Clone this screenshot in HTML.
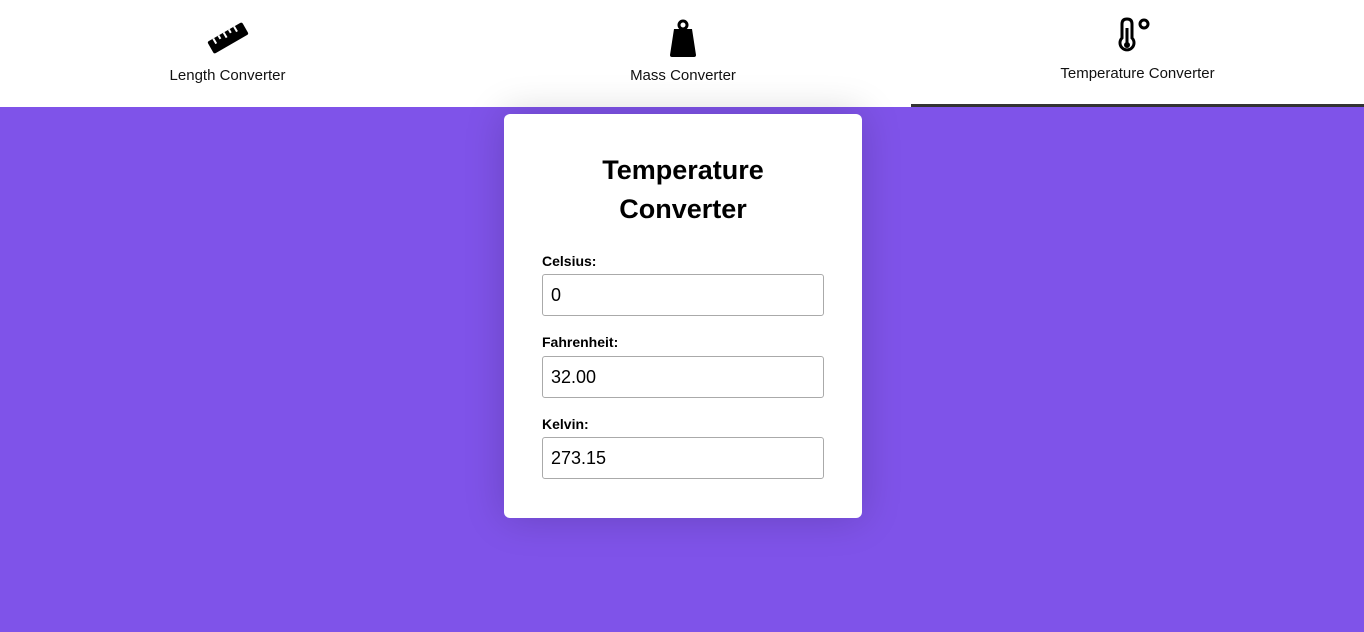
<!DOCTYPE html>
<html><head><style>
body{margin:0;width:1364px;height:632px;background:#7f53e9;font-family:"Liberation Sans",sans-serif;overflow:hidden;position:relative}
.nav{position:absolute;top:0;left:0;width:1364px;height:107px;background:#fff}
.tab{position:absolute;top:0;height:107px;text-align:center;font-size:15px;color:#111}
.tab .lbl{position:absolute;left:0;right:0;top:67px}
.tab.active{border-bottom:3px solid #333;height:104px}
.tab.active .lbl{top:65px}
.tab svg{position:absolute;left:50%;transform:translateX(-50%)}
.card{position:absolute;left:504px;top:114px;width:358px;height:404px;background:#fff;border-radius:6px;box-shadow:0 0 40px rgba(0,0,0,.18)}
h1{margin:0;position:absolute;top:37px;left:0;right:0;text-align:center;font-size:27px;line-height:39px;font-weight:bold;color:#000}
label{position:absolute;left:38px;font-size:14px;font-weight:bold;color:#000}
.in{position:absolute;left:38px;width:282px;height:42px;border:1px solid #aaa;border-radius:3px;box-sizing:border-box;font-size:18px;line-height:40px;padding-left:8px;color:#000}
</style></head><body>
<div class="nav">
<div class="tab" style="left:0;width:455px"><svg style="top:18px" width="50" height="40" viewBox="0 0 50 40"><g transform="rotate(-30 25 20)"><rect x="5" y="13" width="40" height="14" rx="2" fill="#000"/><g stroke="#fff" stroke-width="2"><line x1="12" y1="13" x2="12" y2="19"/><line x1="18" y1="13" x2="18" y2="17"/><line x1="24" y1="13" x2="24" y2="19"/><line x1="30" y1="13" x2="30" y2="17"/><line x1="36" y1="13" x2="36" y2="19"/></g></g></svg><div class="lbl">Length Converter</div></div>
<div class="tab" style="left:455px;width:456px"><svg style="top:18px" width="40" height="40" viewBox="0 0 40 40"><circle cx="20" cy="7" r="4" fill="none" stroke="#000" stroke-width="3"/><path d="M11 11H29L33 37Q33 39 31 39H9Q7 39 7 37Z" fill="#000"/></svg><div class="lbl">Mass Converter</div></div>
<div class="tab active" style="left:911px;width:453px"><svg style="top:16px" width="44" height="40" viewBox="0 0 44 40"><path d="M11 3Q16 3 16 8V22A7 7 0 1 1 6 22V8Q6 3 11 3Z" fill="none" stroke="#000" stroke-width="3"/><line x1="11" y1="12" x2="11" y2="28" stroke="#000" stroke-width="3"/><circle cx="11" cy="29" r="3" fill="#000"/><circle cx="28" cy="8" r="4" fill="none" stroke="#000" stroke-width="3"/></svg><div class="lbl">Temperature Converter</div></div>
</div>
<div class="card">
<h1>Temperature<br>Converter</h1>
<label style="top:139px">Celsius:</label><div class="in" style="top:160px">0</div>
<label style="top:220px">Fahrenheit:</label><div class="in" style="top:242px">32.00</div>
<label style="top:302px">Kelvin:</label><div class="in" style="top:323px">273.15</div>
</div>
</body></html>
